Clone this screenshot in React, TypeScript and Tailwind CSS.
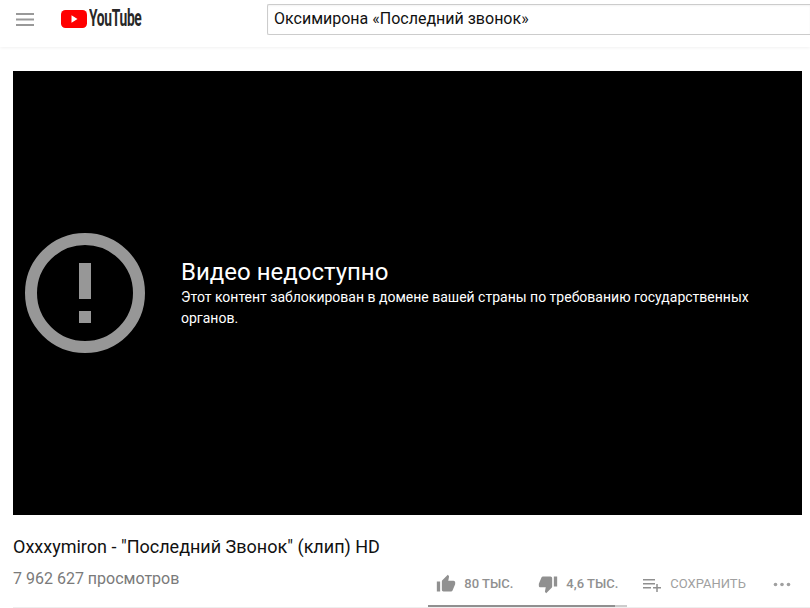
const roboto = "font-['Roboto',sans-serif]";

const Header = () => (
  <header className="flex h-[47px] items-center bg-white pb-[9px] shadow-[0_1px_3px_rgba(0,0,0,0.06)]">
    <svg className="ml-[16px] h-[13px] w-[18px]" viewBox="0 0 18 13" fill="#999">
      <rect y="0" width="18" height="2" />
      <rect y="5.5" width="18" height="2" />
      <rect y="11" width="18" height="2" />
    </svg>
    <div className="ml-[27px] flex w-[80px] items-center">
      <svg className="h-[18px] w-[26px] shrink-0" viewBox="0 0 26 18">
        <rect width="26" height="18" rx="4.5" fill="#f00" />
        <path d="M10.5 5.2 L16.5 9 L10.5 12.8 Z" fill="#fff" />
      </svg>
      <span className="ml-[2px] origin-left scale-x-[0.6] font-['Roboto',sans-serif] text-[23px] font-bold tracking-[-0.5px] whitespace-nowrap text-[#282828]">
        YouTube
      </span>
    </div>
    <div
      className={`ml-[126px] flex h-[31px] flex-1 items-center rounded-l-[2px] border border-r-0 border-[#ccc] pl-[6px] text-[16px] text-[#111] shadow-[inset_0_1px_2px_rgba(0,0,0,0.05)] ${roboto}`}
    >
      Оксимирона «Последний звонок»
    </div>
  </header>
);

const Player = () => (
  <div className="ml-[13px] flex h-[444px] w-[789px] items-center bg-black">
    <svg className="ml-[12px] h-[120px] w-[120px] shrink-0" viewBox="0 0 120 120">
      <circle cx="60" cy="60" r="54" fill="none" stroke="#979797" strokeWidth="12" />
      <rect x="54" y="30" width="12" height="36" fill="#979797" />
      <rect x="54" y="78" width="12" height="12" fill="#979797" />
    </svg>
    <div className={`ml-[36px] w-[580px] text-white ${roboto}`}>
      <div className="text-[24px] leading-[28px]">Видео недоступно</div>
      <div className="mt-[1px] text-[14px] leading-[21px] font-[450]">
        Этот контент заблокирован в домене вашей страны по требованию государственных органов.
      </div>
    </div>
  </div>
);

const ThumbUp = ({ down = false }: { down?: boolean }) => (
  <svg className={`h-[20px] w-[20px] ${down ? "rotate-180" : ""}`} viewBox="0 0 24 24" fill="#909090">
    <path d="M1 21h4V9H1v12zm22-11c0-1.1-.9-2-2-2h-6.31l.95-4.57.03-.32c0-.41-.17-.79-.44-1.06L14.17 1 7.59 7.59C7.22 7.95 7 8.45 7 9v10c0 1.1.9 2 2 2h9c.83 0 1.54-.5 1.84-1.22l3.02-7.05c.09-.23.14-.47.14-.73v-2z" />
  </svg>
);

const Info = () => (
  <div className={`${roboto}`}>
    <div className="mt-[21px] ml-[13px] text-[18px] leading-[22px] text-[#111]">
      Oxxxymiron - "Последний Звонок" (клип) HD
    </div>
    <div className="mt-[10px] flex h-[39px]">
      <div className="ml-[13px] pt-[1px] text-[16px] leading-[20px] text-[#7a7a7a]">7 962 627 просмотров</div>
      <div className="ml-[257px] flex h-[32px] items-center self-start text-[13px] font-medium text-[#909090]">
        <ThumbUp />
        <span className="ml-[8px]">80 ТЫС.</span>
        <span className="ml-[25px]"><ThumbUp down /></span>
        <span className="ml-[8px]">4,6 ТЫС.</span>
        <svg className="ml-[25px] h-[16px] w-[18px]" viewBox="0 0 18 16" fill="#909090">
          <rect x="0" y="3" width="12" height="1.5" />
          <rect x="0" y="7" width="12" height="1.5" />
          <rect x="0" y="11" width="8" height="1.5" />
          <rect x="10" y="11" width="8" height="1.5" />
          <rect x="13.25" y="8" width="1.5" height="8" />
        </svg>
        <span className="ml-[9px] font-normal text-[#a0a0a0]">СОХРАНИТЬ</span>
        <svg className="ml-[27px] h-[5px] w-[18px]" viewBox="0 0 18 5" fill="#a0a0a0">
          <circle cx="2.5" cy="2.5" r="1.8" />
          <circle cx="9" cy="2.5" r="1.8" />
          <circle cx="15.5" cy="2.5" r="1.8" />
        </svg>
      </div>
    </div>
    <div className="ml-[13px] h-[1px] bg-[#eee]" />
  </div>
);

export default function App() {
  return (
    <div className="relative h-[608px] w-[810px] overflow-hidden bg-white">
      <Header />
      <div className="h-[24px]" />
      <Player />
      <Info />
      {/* like bar */}
      <div className="absolute top-[605px] left-[428px] flex h-[2px] w-[199px] bg-[#ccc]">
        <div className="h-full w-[187px] bg-[#909090]" />
      </div>
    </div>
  );
}
